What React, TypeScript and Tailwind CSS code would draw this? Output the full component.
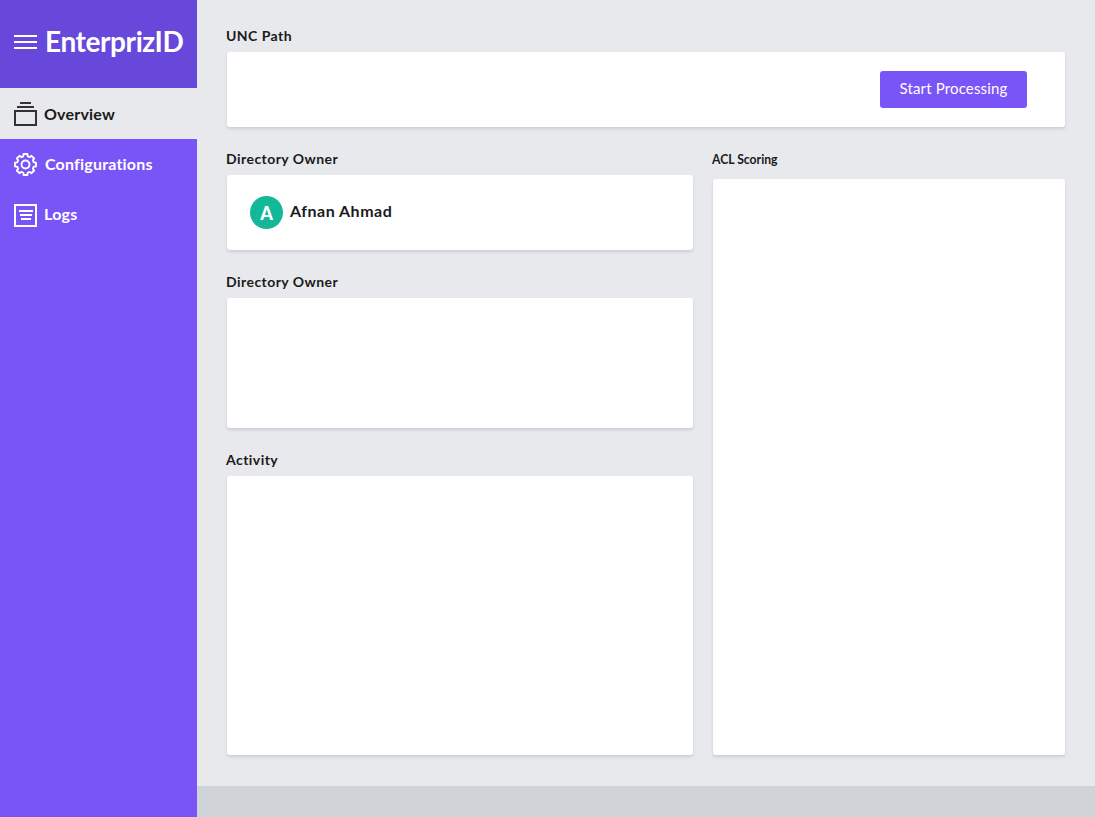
import type { ReactNode } from "react";

function MenuIcon() {
  return (
    <svg width="23" height="14" viewBox="0 0 23 14" className="shrink-0 fill-white" shapeRendering="crispEdges">
      <path d="M0 0h23v2H0zM0 6h23v2H0zM0 12h23v2H0z" />
    </svg>
  );
}

function StackIcon() {
  return (
    <svg width="23" height="24" viewBox="0 0 23 24" className="shrink-0 fill-[#333]" shapeRendering="crispEdges">
      <path d="M6 0h11v2H6zM3 4h17v2H3z" />
      <path fillRule="evenodd" d="M0 8h23v16H0zM2 10v12h19V10z" />
    </svg>
  );
}

function GearIcon() {
  return (
    <svg width="23" height="23" viewBox="-11.5 -11.5 23 23" className="shrink-0 fill-none stroke-white" strokeWidth="1.9" strokeLinejoin="round">
      <path d="M-1.9-10.5H1.9L2.2-8.3Q3.1-7.6 4.3-7.4L6-8.7 8.7-6 7.4-4.3Q7.6-3.100 8.300-2.200L10.500-1.900V1.900L8.300 2.200Q7.600 3.100 7.400 4.300L8.700 6 6 8.700 4.300 7.400Q3.100 7.600 2.200 8.300L1.900 10.500H-1.900L-2.200 8.300Q-3.100 7.600-4.300 7.400L-6 8.700-8.700 6-7.400 4.300Q-7.600 3.100-8.300 2.200L-10.500 1.900V-1.900L-8.300-2.200Q-7.600-3.100-7.400-4.300L-8.700-6-6-8.700-4.300-7.400Q-3.100-7.600-2.200-8.300z" />
      <circle r="4" />
    </svg>
  );
}

function LogsIcon() {
  return (
    <svg width="23" height="23" viewBox="0 0 23 23" className="shrink-0 fill-white" shapeRendering="crispEdges">
      <path fillRule="evenodd" d="M0 0h23v23H0zM2 2v19h19V2z" />
      <path d="M5 6h14v2H5zM6 10h12v2H6zM7 14h10v2H7z" />
    </svg>
  );
}

function Label({ children }: { children: ReactNode }) {
  return <h2 className="-ml-px h-5 text-sm leading-5 font-bold tracking-[0.45px] whitespace-nowrap">{children}</h2>;
}

const card = "rounded-[3px] bg-white shadow-[0_2px_3px_rgba(60,75,90,0.17)]";

export default function App() {
  return (
    <div className="flex h-[817px] w-[1095px] overflow-hidden bg-[#e8e9ed] font-['Lato',sans-serif] text-[#1a1a1a]">
      <aside className="flex w-[197px] shrink-0 flex-col bg-[#7954f7] text-white">
        <header className="flex h-[88px] items-center gap-2 bg-[#6848da] pb-1 pl-3.5">
          <MenuIcon />
          <h1 className="pb-0.5 text-[28px] leading-9 font-bold tracking-[-0.4px] whitespace-nowrap">EnterprizID</h1>
        </header>
        <nav className="flex flex-col text-base font-bold">
          <a className="flex h-[51px] items-center gap-[7px] bg-[#e8e9ed] pl-3.5 text-[#1a1a1a]">
            <StackIcon />
            <span className="tracking-[0.2px]">Overview</span>
          </a>
          <a className="flex h-[51px] items-center gap-2 pl-3.5">
            <GearIcon />
            <span className="pb-0.5 tracking-[0.2px]">Configurations</span>
          </a>
          <a className="flex h-[51px] items-center gap-[7px] pl-3.5">
            <LogsIcon />
            <span className="pb-[3px] tracking-[0.3px]">Logs</span>
          </a>
        </nav>
      </aside>
      <div className="flex flex-1 flex-col">
        <main className="flex h-[786px] flex-col pt-[26px] pr-[30px] pl-[30px]">
          <Label>UNC Path</Label>
          <section className={`${card} mt-1.5 flex h-[75px] items-center justify-end pr-[38px]`}>
            <button className="h-[37px] w-[147px] rounded-[3px] bg-[#7954f7] pb-[3px] text-[15px] tracking-[0.15px] text-white">
              Start Processing
            </button>
          </section>
          <div className="mt-[22px] flex gap-5">
            <div className="flex w-[466px] flex-col">
              <Label>Directory Owner</Label>
              <section className={`${card} mt-1.5 flex h-[75px] items-center gap-[7px] pl-[23px]`}>
                <span className="flex size-[33px] items-center justify-center rounded-full bg-[#14b899] text-lg font-black text-white">A</span>
                <span className="pb-[3px] text-base font-bold tracking-[0.5px]">Afnan Ahmad</span>
              </section>
              <div className="mt-[22px]"><Label>Directory Owner</Label></div>
              <section className={`${card} mt-1.5 h-[130px]`} />
              <div className="mt-[22px]"><Label>Activity</Label></div>
              <section className={`${card} mt-1.5 h-[279px]`} />
            </div>
            <div className="flex w-[352px] flex-col">
              <h2 className="-ml-px h-5 origin-left scale-x-87 text-sm leading-5 font-bold">ACL Scoring</h2>
              <section className={`${card} mt-2.5 h-[576px]`} />
            </div>
          </div>
        </main>
        <footer className="h-[31px] bg-[#d0d3d8]" />
      </div>
    </div>
  );
}
